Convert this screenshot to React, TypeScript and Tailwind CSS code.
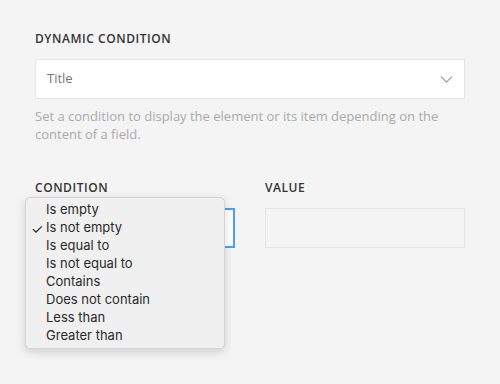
import { ChevronDown } from "lucide-react"

const options = [
  "Is empty",
  "Is not empty",
  "Is equal to",
  "Is not equal to",
  "Contains",
  "Does not contain",
  "Less than",
  "Greater than",
]

export default function App() {
  return (
    <div
      className="relative h-[384px] w-[500px] bg-[#f4f4f4] px-[35px] pt-[31px]"
      style={{ fontFamily: '"Open Sans", sans-serif' }}
    >
      <div className="text-[12px] font-semibold leading-4 tracking-[0.55px] text-[#333]">
        DYNAMIC CONDITION
      </div>
      <div className="mt-[12px] flex h-[40px] w-[430px] items-center justify-between border border-[#e6e6e6] bg-white pl-[11px] pr-[7px]">
        <span className="text-[13px] text-[#777]">Title</span>
        <ChevronDown className="h-[21px] w-[21px] text-[#999]" strokeWidth={1.4} />
      </div>
      <p className="mt-[8px] w-[430px] text-[13px] leading-[18px] text-[#aaa]">
        Set a condition to display the element or its item depending on the content of a field.
      </p>

      <div className="mt-[37px] flex gap-[30px]">
        <div className="w-[200px]">
          <div className="text-[12px] font-semibold leading-4 tracking-[0.55px] text-[#333]">
            CONDITION
          </div>
          <div className="mt-[12px] h-[40px] border-2 border-[#4a9eff] bg-white" />
        </div>
        <div className="w-[200px]">
          <div className="text-[12px] font-semibold leading-4 tracking-[0.55px] text-[#333]">
            VALUE
          </div>
          <div className="mt-[12px] h-[40px] border border-[#e6e6e6] bg-[#f4f4f4]" />
        </div>
      </div>

      {/* native select popup */}
      <div
        className="absolute left-[25px] top-[197px] w-[200px] rounded-[5px] border border-[#d4d4d4] bg-[#f0f0f0] py-[3px] shadow-[0_3px_10px_rgba(0,0,0,0.15)]"
        style={{ fontFamily: 'Inter, "Liberation Sans", sans-serif' }}
      >
        {options.map((o) => (
          <div key={o} className="relative flex h-[18px] items-center pl-[20px] text-[13px] text-[#2a2a2a]">
            {o === "Is not empty" && (
              <span className="absolute left-[5px] text-[14px]">✓</span>
            )}
            {o}
          </div>
        ))}
      </div>
    </div>
  )
}
